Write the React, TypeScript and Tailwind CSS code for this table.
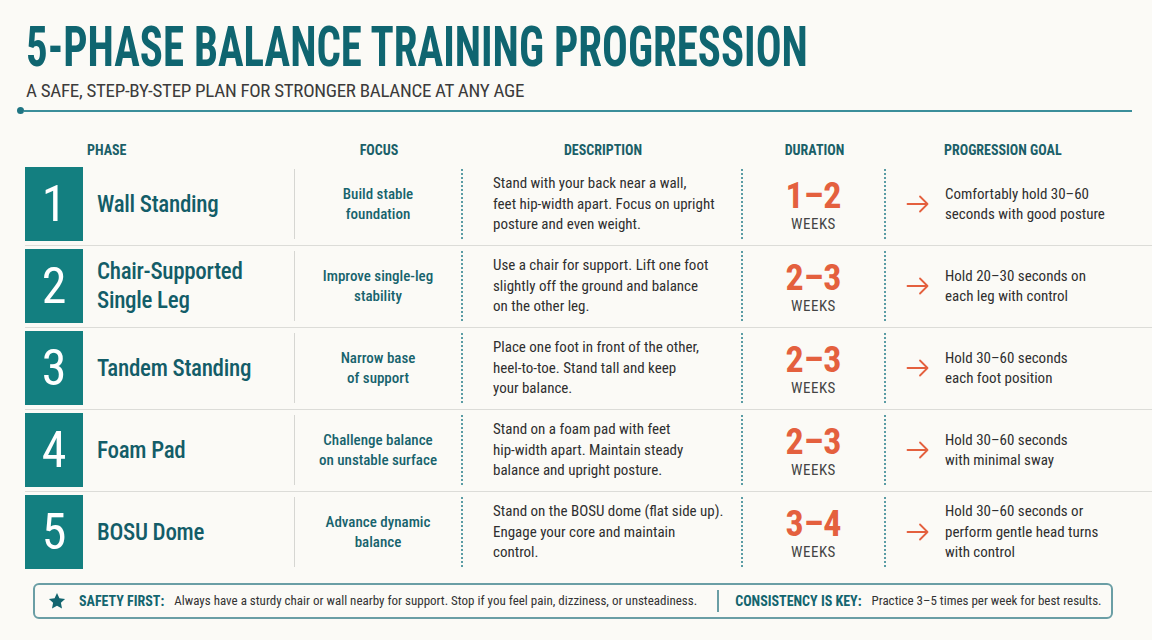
type Phase = {
  num: string;
  name: string[];
  focus: string[];
  desc: string[];
  weeks: string;
  goal: string[];
};

const phases: Phase[] = [
  {
    num: "1",
    name: ["Wall Standing"],
    focus: ["Build stable", "foundation"],
    desc: ["Stand with your back near a wall,", "feet hip-width apart. Focus on upright", "posture and even weight."],
    weeks: "1–2",
    goal: ["Comfortably hold 30–60", "seconds with good posture"],
  },
  {
    num: "2",
    name: ["Chair-Supported", "Single Leg"],
    focus: ["Improve single-leg", "stability"],
    desc: ["Use a chair for support. Lift one foot", "slightly off the ground and balance", "on the other leg."],
    weeks: "2–3",
    goal: ["Hold 20–30 seconds on", "each leg with control"],
  },
  {
    num: "3",
    name: ["Tandem Standing"],
    focus: ["Narrow base", "of support"],
    desc: ["Place one foot in front of the other,", "heel-to-toe. Stand tall and keep", "your balance."],
    weeks: "2–3",
    goal: ["Hold 30–60 seconds", "each foot position"],
  },
  {
    num: "4",
    name: ["Foam Pad"],
    focus: ["Challenge balance", "on unstable surface"],
    desc: ["Stand on a foam pad with feet", "hip-width apart. Maintain steady", "balance and upright posture."],
    weeks: "2–3",
    goal: ["Hold 30–60 seconds", "with minimal sway"],
  },
  {
    num: "5",
    name: ["BOSU Dome"],
    focus: ["Advance dynamic", "balance"],
    desc: ["Stand on the BOSU dome (flat side up).", "Engage your core and maintain", "control."],
    weeks: "3–4",
    goal: ["Hold 30–60 seconds or", "perform gentle head turns", "with control"],
  },
];

const cols = "grid grid-cols-[58px_212px_168px_280px_143px_245px]";

function Lines({ items }: { items: string[] }) {
  return (
    <>
      {items.map((t, i) => (
        <div key={i} className="whitespace-nowrap">
          {t}
        </div>
      ))}
    </>
  );
}

function Arrow() {
  return (
    <svg viewBox="0 0 24 18" className="w-[24px] h-[18px] shrink-0 mr-[15px]" fill="none" stroke="#e4603e" strokeWidth={1.8} strokeLinecap="round" strokeLinejoin="round">
      <path d="M1.5 9h20M14 1.5L21.5 9 14 16.5" />
    </svg>
  );
}

export default function App() {
  return (
    <div className="w-[1152px] h-[640px] bg-[#fbfaf6] overflow-hidden text-[#333] font-['Roboto_Condensed',Roboto,sans-serif]">
      {/* header */}
      <div className="pl-[26px] pt-[19px]">
        <h1 className="text-[56px] leading-[56px] font-bold text-[#0f6570] whitespace-nowrap origin-left scale-x-[0.766]">
          5-PHASE BALANCE TRAINING PROGRESSION
        </h1>
        <p className="mt-[4px] text-[19px] leading-[24px] tracking-[-0.3px] text-[#3b3b3b] whitespace-nowrap">
          A SAFE, STEP-BY-STEP PLAN FOR STRONGER BALANCE AT ANY AGE
        </p>
      </div>
      <div className="flex items-center ml-[17px] mr-[20px] mt-[4px]">
        <div className="w-[7px] h-[7px] rounded-full bg-[#1f7583]" />
        <div className="flex-1 h-[2px] bg-[#3b8e9a]" />
      </div>

      {/* table */}
      <div className="ml-[25px] mt-[26px]">
        <div className={`${cols} text-[14px] font-bold text-[#1a5f68] h-[24px] items-start`}>
          <div className="col-span-2 pl-[62px]">PHASE</div>
          <div className="text-center">FOCUS</div>
          <div className="text-center">DESCRIPTION</div>
          <div className="text-center">DURATION</div>
          <div className="pl-[58px]">PROGRESSION GOAL</div>
        </div>

        {phases.map((p, i) => (
          <div
            key={p.num}
            className={`${cols} pt-[3px] pb-[4px] ${i < phases.length - 1 ? "border-b border-[#dcdcd8]" : ""}`}
          >
            <div className="h-[74px] bg-[#137f80] flex items-center justify-center text-white text-[50px]">
              {p.num}
            </div>
            <div className="flex items-center pl-[14px] text-[23px] leading-[29px] tracking-[-0.3px] text-[#135d68] font-medium border-r border-[#d6d6d2] my-[2px]">
              <div>
                <Lines items={p.name} />
              </div>
            </div>
            <div className="flex items-center justify-center text-center text-[15px] leading-[20px] font-medium text-[#17636d] border-r-2 border-dotted border-[#5a9ca4] my-[2px]">
              <div>
                <Lines items={p.focus} />
              </div>
            </div>
            <div className="flex items-center pl-[30px] text-[15px] leading-[20.5px] text-[#2f2f2f] border-r-2 border-dotted border-[#5a9ca4] my-[2px]">
              <div>
                <Lines items={p.desc} />
              </div>
            </div>
            <div className="flex flex-col items-center justify-center border-r-2 border-dotted border-[#5a9ca4] my-[2px]">
              <div className="text-[36px] leading-[40px] font-bold text-[#e4603e]">{p.weeks}</div>
              <div className="text-[15px] leading-[16px] tracking-[0.5px] text-[#444]">WEEKS</div>
            </div>
            <div className="flex items-center pl-[20px] text-[15px] leading-[20.5px] text-[#2f2f2f]">
              <Arrow />
              <div>
                <Lines items={p.goal} />
              </div>
            </div>
          </div>
        ))}
      </div>

      {/* footer */}
      <div className="ml-[33px] w-[1080px] mt-[10px] h-[36px] border-2 border-[#6a9ea5] rounded-[6px] flex items-center pl-[12px] text-[13px] text-[#333] whitespace-nowrap">
        <svg viewBox="0 0 24 24" className="w-[20px] h-[20px] mr-[12px]" fill="#13656f">
          <path d="M12 2.5l2.9 6.2 6.8.8-5 4.7 1.3 6.7L12 17.6l-6 3.3 1.3-6.7-5-4.7 6.8-.8z" />
        </svg>
        <span className="font-bold text-[14px] text-[#13656f] mr-[10px]">SAFETY FIRST:</span>
        <span>Always have a sturdy chair or wall nearby for support. Stop if you feel pain, dizziness, or unsteadiness.</span>
        <div className="w-[2px] h-[22px] bg-[#6a9ea5] ml-[20px] mr-[16px]" />
        <span className="font-bold text-[14px] text-[#13656f] mr-[10px]">CONSISTENCY IS KEY:</span>
        <span>Practice 3–5 times per week for best results.</span>
      </div>
    </div>
  );
}
